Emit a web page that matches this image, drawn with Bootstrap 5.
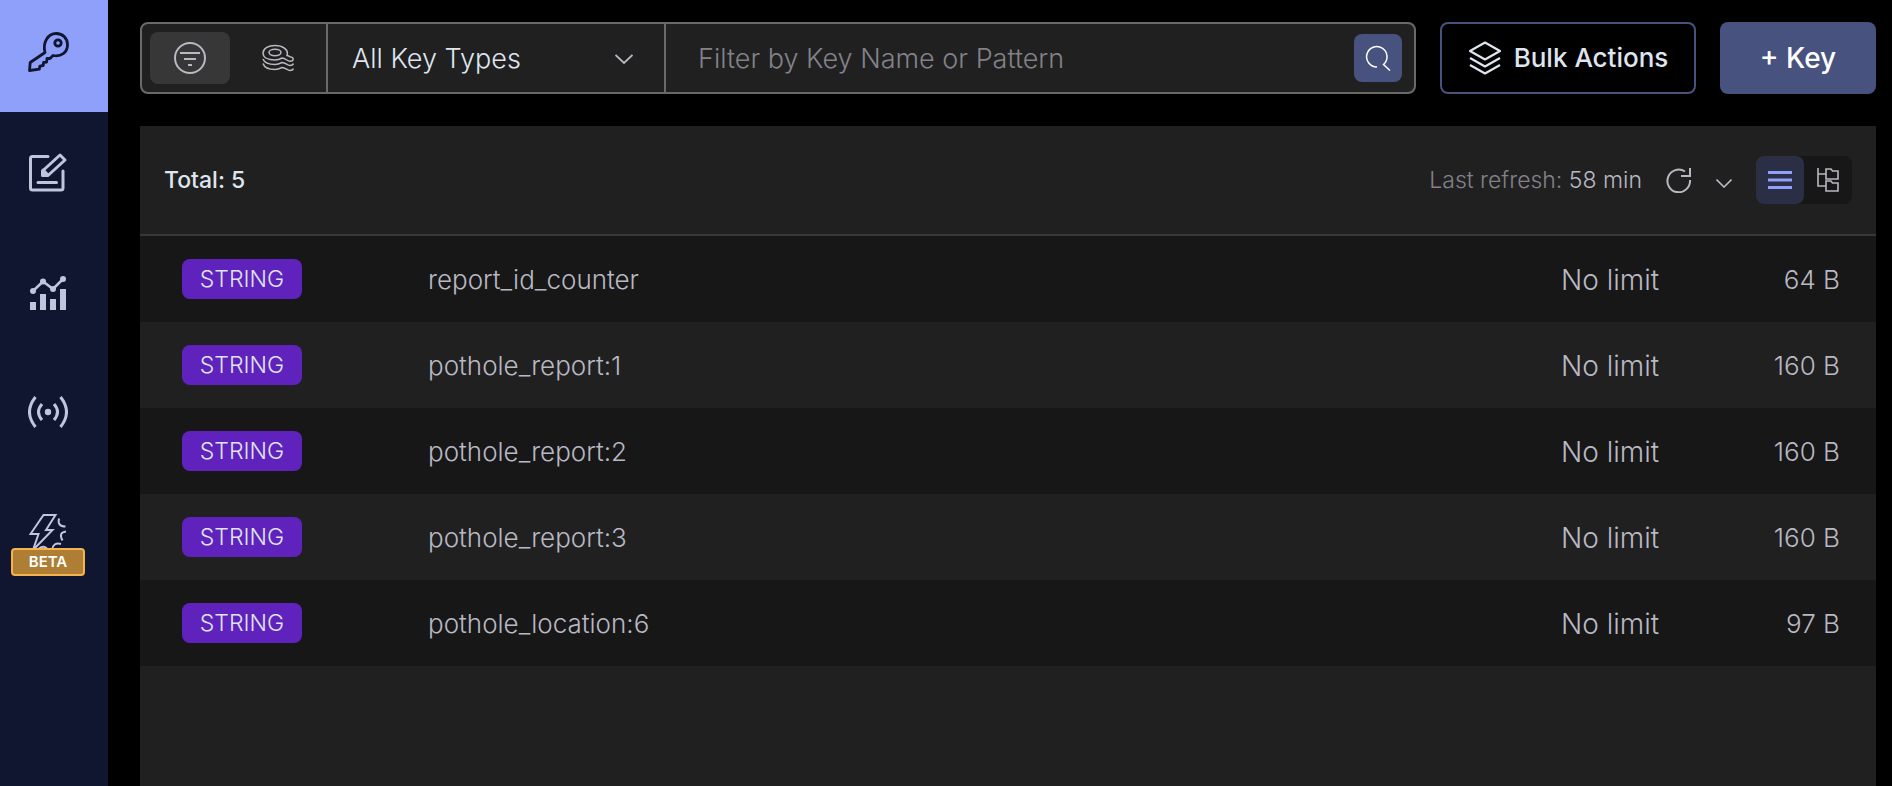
<!DOCTYPE html>
<html lang="en" data-bs-theme="dark">
<head>
<meta charset="utf-8">
<meta name="viewport" content="width=device-width, initial-scale=1">
<title>Browser</title>
<link rel="stylesheet" href="https://cdn.jsdelivr.net/npm/bootstrap@5.3.0/dist/css/bootstrap.min.css">
<style>
  body { background: #000; color: #dfe5ef; font-family: Inter, "Liberation Sans", sans-serif; font-size: 23px; font-weight: 300; line-height: 32px; }
  svg { display: block; flex: none; fill: none; stroke: currentColor; }
  button { color: inherit; }

  .side-nav { width: 108px; background: #101530; }
  .side-nav a { height: 120px; color: #bfc5db; padding-right: 12px; }
  .side-nav a.active { height: 112px; padding-bottom: 10px; background: #8fa0fa; color: #101530; }
  .beta-tag { left: 11px; top: 76px; width: 74px; height: 28px; font-size: 15px; line-height: 24px; font-weight: 600; color: #fff; background: #ad7e33; border: 2px solid #f6b24c; border-radius: 4px; text-align: center; }

  .main-col { padding: 22px 16px 0 32px; gap: 32px; }
  .filter-box { height: 72px; background: #202020; border: 2px solid #6a6a6a; border-radius: 8px; }
  .filter-box > * + * { border-left: 2px solid #6a6a6a; }
  .mode-group { width: 184px; padding: 0 8px; }
  .mode-group button { width: 80px; height: 52px; border: 0; border-radius: 8px; background: none; color: #b9b8c3; }
  .mode-group button.active { background: #373737; }
  .type-pick { width: 338px; }
  .type-pick select { appearance: none; background: #202020; border: 0; color: #dfe5ef; font-size: 27px; font-weight: 300; padding: 2px 24px 0; }
  .type-pick svg { right: 31px; top: 30px; pointer-events: none; color: #b9b8c3; }
  .search-part { padding: 0 12px 0 32px; }
  .search-part input { background: none; border: 0; outline: 0; color: #dfe5ef; font-size: 27px; font-weight: 300; padding: 2px 0 0; }
  .search-part input::placeholder { color: #83828a; opacity: 1; }
  .search-btn { width: 48px; height: 48px; border: 0; border-radius: 8px; background: #48527e; color: #fff; }
  .bulk-btn { width: 256px; border: 2px solid #48527e; border-radius: 8px; background: #000; color: #dfe5ef; font-size: 26px; font-weight: 500; gap: 12px; }
  .add-btn { width: 156px; border: 0; border-radius: 8px; background: #48527e; color: #fff; font-size: 28px; font-weight: 500; }

  .key-panel { background: #202020; }
  .panel-head { height: 110px; padding: 0 24px; border-bottom: 2px solid #383838; color: #b9b8c3; }
  .total-text { font-weight: 500; color: #dfe5ef; }
  .dim-text { color: #83828a; }
  .plain-btn { border: 0; background: none; padding: 0; }
  .view-group { border-radius: 8px; background: #171717; }
  .view-group button { width: 48px; height: 48px; border: 0; border-radius: 8px; background: none; }
  .view-group button.active { background: #2b2f45; color: #8fa0fa; }

  .key-table { table-layout: fixed; width: 100%; color: #b9b8c3; font-size: 26px; }
  .key-table tr:nth-child(odd) { background: #171717; }
  .key-table td { height: 86px; padding: 2px 0 0; vertical-align: middle; }
  .key-table .c-type { width: 288px; padding: 0 0 0 42px; }
  .key-table .c-ttl { width: 175px; font-size: 28px; }
  .key-table .c-size { width: 140px; padding-right: 36px; text-align: right; }
  .type-tag { width: 120px; height: 40px; font-size: 23px; line-height: 40px; border-radius: 8px; background: #6022bd; color: #dfe5ef; text-align: center; }
</style>
</head>
<body>
<div class="d-flex min-vh-100">
  <nav class="side-nav flex-shrink-0" aria-label="Main">
    <a href="#" class="active d-flex align-items-center justify-content-center" aria-label="Browser">
      <svg width="44" height="44" viewBox="0 0 44 44" stroke-width="2.8" stroke-linejoin="round"><path d="M19 23.500C16.500 14 21.500 4.500 30.200 4.500c6.800 0 11.300 5 11.300 11.200 0 7.800-6.500 12.500-14.500 10.800l-3 3h-3l-.4 3.600-3 .4-.4 3-3.400.6-.4 3-9.900 1.400.7-8z"/><circle cx="32" cy="14" r="3.200"/></svg>
    </a>
    <a href="#" class="d-flex align-items-center justify-content-center" aria-label="Workbench">
      <svg width="40" height="40" viewBox="0 0 40 40" stroke-width="3" stroke-linecap="round" stroke-linejoin="round"><path d="M20 4.500H4.500Q2.500 4.500 2.500 6.500V36q0 2 2 2H33q2 0 2-2V19"/><path d="M10 30.500h18.500"/><path d="M32 3l5 5-17 15.500h-5.500V19z"/><path d="M15 18l5 5h-5z" fill="currentColor"/></svg>
    </a>
    <a href="#" class="d-flex align-items-center justify-content-center" aria-label="Analysis">
      <svg width="38" height="36" viewBox="0 0 38 36" stroke-width="2.500"><path d="M4 17L14 7.500l10 7.500L34 5"/><g fill="currentColor" stroke="none"><circle cx="4" cy="17" r="3"/><circle cx="14" cy="7.500" r="3"/><circle cx="24" cy="15" r="3"/><circle cx="34" cy="5" r="3"/><path d="M1 28h6v8H1zM11 20h6v16h-6zM21 25h6v11h-6zM31 15h6v21h-6z"/></g></svg>
    </a>
    <a href="#" class="d-flex align-items-center justify-content-center" aria-label="Pub/Sub">
      <svg width="40" height="32" viewBox="0 0 40 32" stroke-width="3"><circle cx="20" cy="16" r="3.200" fill="currentColor" stroke="none"/><path d="M7.500 1q-12 15 0 30M32.500 1q12 15 0 30M14 8q-7 8 0 16M26 8q7 8 0 16"/></svg>
    </a>
    <a href="#" class="d-flex align-items-center justify-content-center position-relative text-decoration-none" aria-label="Triggers and functions (beta)">
      <svg width="38" height="38" viewBox="0 0 38 38" stroke="#e3e7f2" stroke-width="2"><path d="M14.500 2H26.500L17 17h6.500L4 37l5.500-16H1.500z"/><path d="M30 5.500q-2 8 6.500 8M37 18.500q-8 1-3.500 9M32 31q-8-2-9 6M10 35.500q5-4 9 1"/></svg>
      <span class="beta-tag position-absolute">BETA</span>
    </a>
  </nav>

  <main class="main-col d-flex flex-column flex-grow-1">
    <div class="d-flex align-items-stretch gap-4">
      <div class="filter-box d-flex flex-grow-1">
        <div class="mode-group d-flex align-items-center gap-2">
          <button type="button" class="active d-flex align-items-center justify-content-center" aria-label="Filter by name">
            <svg width="32" height="32" viewBox="0 0 32 32" stroke-width="2"><circle cx="16" cy="16" r="15"/><path d="M6 11h20M10 17h12M14 23h4"/></svg>
          </button>
          <button type="button" class="d-flex align-items-center justify-content-center" aria-label="Search by values">
            <svg width="32" height="28" viewBox="0 0 32 28" stroke-width="1.500"><ellipse cx="13" cy="8.500" rx="6" ry="3.200"/><path d="M25 11.500C27 5 20 1.500 13 1.500S1 4.500 1 9s5 7 12 7c3 0 5-.8 7-2 4 0 5 3.500 8.500 3.300 3.500-.3 3.500-3.800.5-4.300-1.500-.2-2-1.200-4-1.500zM1 15c1.500 4 6 5.500 12 5.500 3 0 5-1 7-2 4 0 5 3 8 3 2 0 3-.5 3.500-2M1 19.500C2.500 24 7 25.500 13 25.500c3 0 5-1 7-2 4 0 5 3 8 3 2 0 3-.5 3.500-2"/></svg>
          </button>
        </div>
        <div class="type-pick position-relative">
          <select class="w-100 h-100" aria-label="Key type"><option>All Key Types</option><option>String</option></select>
          <svg class="position-absolute" width="18" height="10" viewBox="0 0 18 10" stroke-width="1.800"><path d="M.5 1L9 9l8.500-8"/></svg>
        </div>
        <div class="search-part d-flex align-items-center flex-grow-1">
          <input type="text" class="flex-grow-1" placeholder="Filter by Key Name or Pattern" aria-label="Filter by Key Name or Pattern">
          <button type="button" class="search-btn d-flex align-items-center justify-content-center p-0" aria-label="Search">
            <svg width="26" height="26" viewBox="0 0 26 26" stroke-width="1.500"><path d="M12 22A10.200 10.200 0 1 1 18.500 19.500L25 25.500"/></svg>
          </button>
        </div>
      </div>
      <button type="button" class="bulk-btn d-flex align-items-center justify-content-center p-0">
        <svg width="34" height="34" viewBox="0 0 34 34" stroke-width="2.200" stroke-linejoin="round"><path d="M17 1.500l15 8.500-15 8.500L2 10zM2 17l15 8.500L32 17M2 24l15 8.500L32 24"/></svg>
        Bulk Actions
      </button>
      <button type="button" class="add-btn p-0">+ Key</button>
    </div>

    <section class="key-panel flex-grow-1">
      <div class="panel-head d-flex align-items-center justify-content-between">
        <span class="total-text">Total: 5</span>
        <div class="d-flex align-items-center gap-4">
          <span><span class="dim-text">Last refresh:</span> 58 min</span>
          <button type="button" class="plain-btn" aria-label="Refresh">
            <svg width="26" height="26" viewBox="0 0 26 26" stroke-width="2"><path d="M24 13A11.300 11.300 0 1 1 19 4.500M24 1v8h-9"/></svg>
          </button>
          <button type="button" class="plain-btn" aria-label="Auto refresh">
            <svg width="16" height="16" viewBox="0 0 16 16" stroke-width="1.600"><path d="M.5 7.500L8 15l7.500-7.500"/></svg>
          </button>
          <div class="view-group d-flex">
            <button type="button" class="active d-flex align-items-center justify-content-center p-0" aria-label="List view">
              <svg width="24" height="18" viewBox="0 0 24 18" stroke-width="3"><path d="M0 1.500h24M0 9h24M0 16.500h24"/></svg>
            </button>
            <button type="button" class="d-flex align-items-center justify-content-center p-0" aria-label="Tree view">
              <svg width="22" height="24" viewBox="0 0 22 24" stroke-width="1.600"><path d="M1 0v18h8M1 6h8M9 1h5l1.500 2H21v8H9zM9 13h5l1.500 2H21v8H9z"/></svg>
            </button>
          </div>
        </div>
      </div>
      <table class="key-table" aria-label="Keys">
        <tbody>
          <tr><td class="c-type"><div class="type-tag">STRING</div></td><td>report_id_counter</td><td class="c-ttl">No limit</td><td class="c-size">64 B</td></tr>
          <tr><td class="c-type"><div class="type-tag">STRING</div></td><td>pothole_report:1</td><td class="c-ttl">No limit</td><td class="c-size">160 B</td></tr>
          <tr><td class="c-type"><div class="type-tag">STRING</div></td><td>pothole_report:2</td><td class="c-ttl">No limit</td><td class="c-size">160 B</td></tr>
          <tr><td class="c-type"><div class="type-tag">STRING</div></td><td>pothole_report:3</td><td class="c-ttl">No limit</td><td class="c-size">160 B</td></tr>
          <tr><td class="c-type"><div class="type-tag">STRING</div></td><td>pothole_location:6</td><td class="c-ttl">No limit</td><td class="c-size">97 B</td></tr>
        </tbody>
      </table>
    </section>
  </main>
</div>
<script src="https://cdn.jsdelivr.net/npm/bootstrap@5.3.0/dist/js/bootstrap.bundle.min.js"></script>
</body>
</html>
